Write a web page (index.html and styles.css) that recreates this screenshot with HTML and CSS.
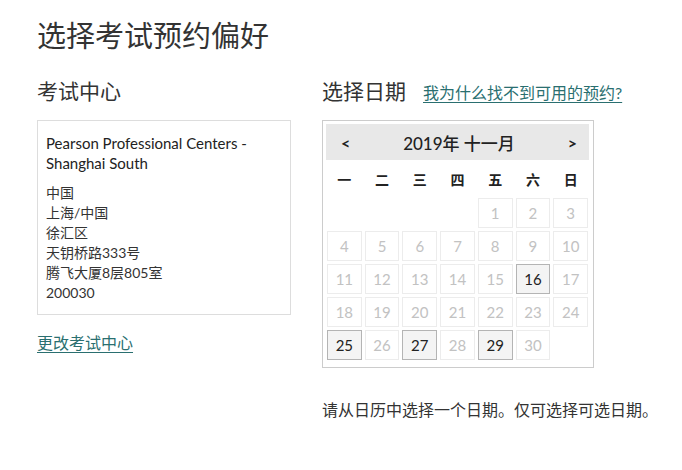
FILE: index.html
```html
<!DOCTYPE html>
<html lang="zh-CN">
<head>
<meta charset="utf-8">
<title>选择考试预约偏好</title>
<link rel="stylesheet" href="styles.css">
</head>
<body>
<main class="page">
  <h1 class="title">选择考试预约偏好</h1>
  <div class="columns">
    <section class="col-left">
      <h2 class="section-title">考试中心</h2>
      <div class="center-box">
        <div class="center-name">Pearson Professional Centers - Shanghai South</div>
        <div class="address">
          <div>中国</div>
          <div>上海/中国</div>
          <div>徐汇区</div>
          <div>天钥桥路333号</div>
          <div>腾飞大厦8层805室</div>
          <div>200030</div>
        </div>
      </div>
      <a class="link change-link" href="#">更改考试中心</a>
    </section>
    <section class="col-right">
      <h2 class="section-title"><span>选择日期</span><a class="link why-link" href="#">我为什么找不到可用的预约?</a></h2>
      <div class="calendar">
        <div class="cal-header">
          <span class="cal-nav">&lt;</span>
          <span class="cal-month">2019年 十一月</span>
          <span class="cal-nav">&gt;</span>
        </div>
        <div class="cal-weekdays">
          <span>一</span><span>二</span><span>三</span><span>四</span><span>五</span><span>六</span><span>日</span>
        </div>
        <div class="cal-grid">
          <span class="empty"></span><span class="empty"></span><span class="empty"></span><span class="empty"></span>
          <span class="day">1</span><span class="day">2</span><span class="day">3</span>
          <span class="day">4</span><span class="day">5</span><span class="day">6</span><span class="day">7</span><span class="day">8</span><span class="day">9</span><span class="day">10</span>
          <span class="day">11</span><span class="day">12</span><span class="day">13</span><span class="day">14</span><span class="day">15</span><span class="day avail">16</span><span class="day">17</span>
          <span class="day">18</span><span class="day">19</span><span class="day">20</span><span class="day">21</span><span class="day">22</span><span class="day">23</span><span class="day">24</span>
          <span class="day avail">25</span><span class="day">26</span><span class="day avail">27</span><span class="day">28</span><span class="day avail">29</span><span class="day">30</span><span class="empty"></span>
        </div>
      </div>
      <p class="hint">请从日历中选择一个日期。仅可选择可选日期。</p>
    </section>
  </div>
</main>
</body>
</html>
```
FILE: styles.css
```css
* { box-sizing: border-box; }
html, body { margin: 0; padding: 0; background: #fff; }
body {
  font-family: Lato, "Noto Sans CJK SC", sans-serif;
  color: #333;
}
.page { padding: 14px 0 0 37px; }
.title {
  margin: 0;
  font-size: 29px;
  line-height: 44px;
  font-weight: 400;
  color: #333;
}
.columns { display: flex; gap: 31px; margin-top: 18px; }
.col-left { width: 254px; }
.col-right { width: 330px; }
.section-title {
  display: flex;
  align-items: baseline;
  height: 30px;
  margin: 0 0 14px;
  font-size: 21px;
  line-height: 30px;
  font-weight: 400;
  color: #333;
  white-space: nowrap;
}
.link { color: #2a6f70; text-decoration: underline; text-underline-offset: 3px; }
.why-link { font-size: 16px; line-height: 24px; margin-left: 17px; }
.center-box {
  border: 1px solid #ddd;
  padding: 12px 8px 11px;
  font-size: 15px;
  line-height: 20px;
  color: #333;
}
.address { font-size: 14px; }
.center-name { font-weight: 400; margin-bottom: 10px; color: #222; }
.change-link { display: inline-block; margin-top: 16px; font-size: 16px; line-height: 24px; }
.calendar {
  width: 272px;
  border: 1px solid #ccc;
  padding: 3px 4px 7px 3px;
}
.cal-header {
  display: flex;
  align-items: center;
  justify-content: space-between;
  height: 36px;
  background: #e8e8e8;
  padding: 0 12px 0 15px;
  font-size: 16px;
  font-weight: 500;
  color: #222;
}
.cal-month { font-size: 17px; }
.cal-nav { font-weight: 700; font-size: 16px; }
.cal-weekdays {
  display: grid;
  grid-template-columns: repeat(7, 1fr);
  column-gap: 3px;
  height: 38px;
  align-items: center;
  padding: 0 1px;
  font-size: 14px;
  font-weight: 700;
  color: #222;
  text-align: center;
}
.cal-grid {
  display: grid;
  grid-template-columns: repeat(7, 1fr);
  grid-auto-rows: 30px;
  gap: 3px;
  padding: 0 1px;
}
.day {
  display: flex;
  align-items: center;
  justify-content: center;
  border: 1px solid #ececec;
  font-size: 15px;
  color: #c2c2c2;
}
.day.avail {
  background: #f4f4f4;
  border-color: #b4b4b4;
  color: #222;
}
.hint {
  margin: 30px 0 0;
  font-size: 16px;
  line-height: 24px;
  color: #333;
  white-space: nowrap;
}
```
